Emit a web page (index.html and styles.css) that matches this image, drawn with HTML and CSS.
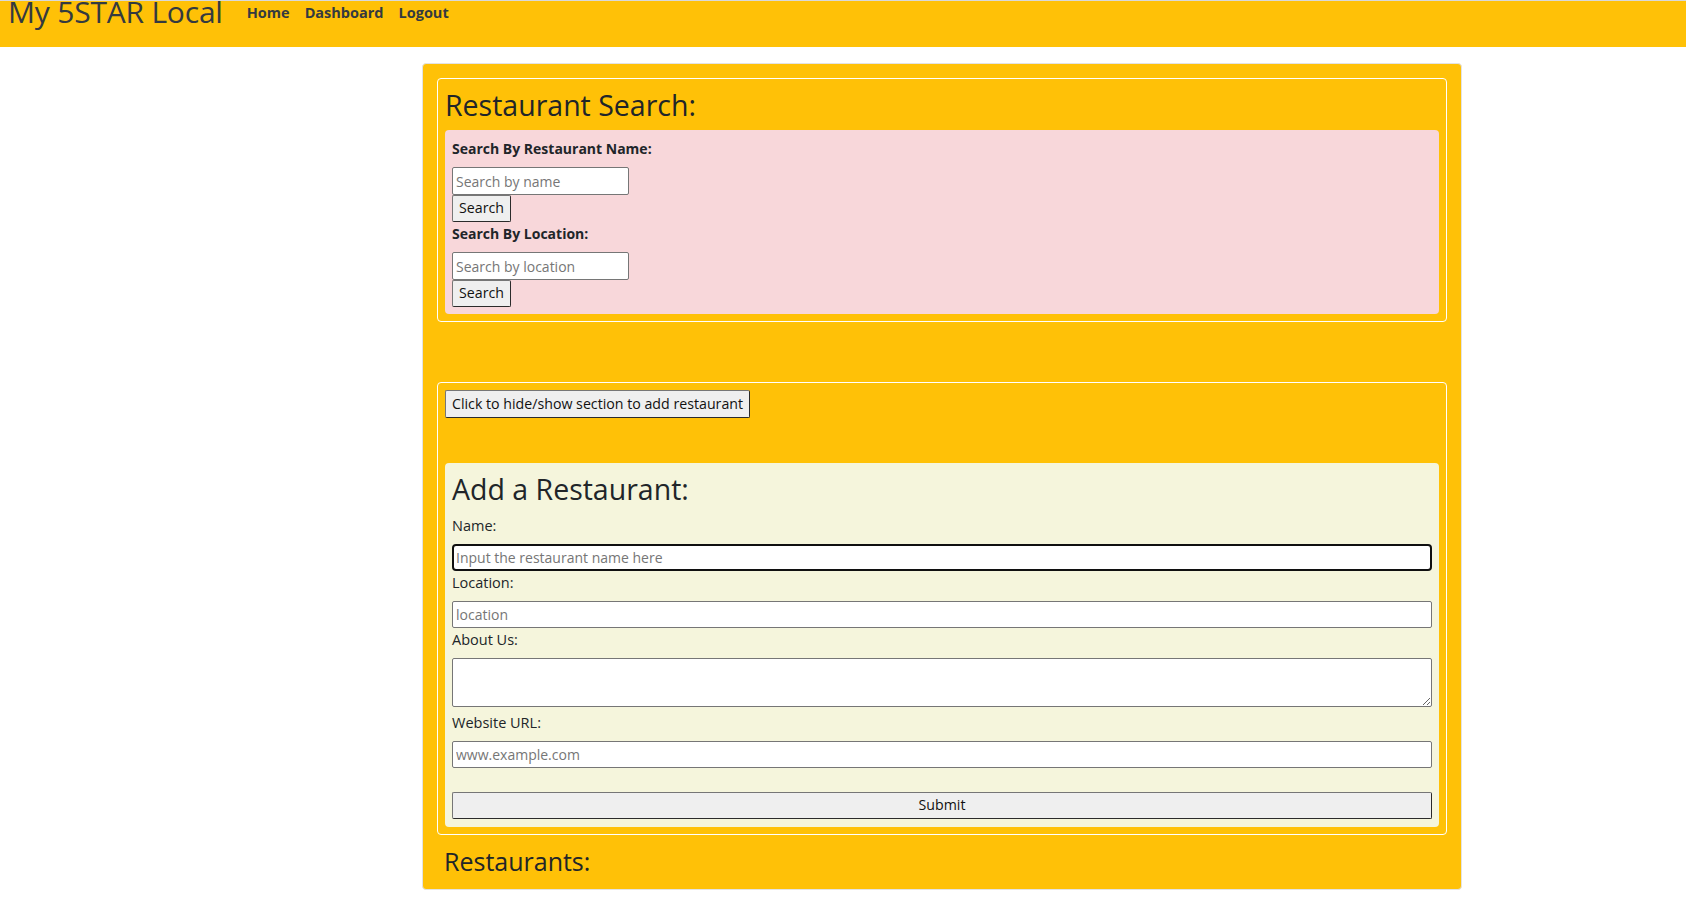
FILE: index.html
```html
<!DOCTYPE html>
<html lang="en">
<head>
<meta charset="utf-8">
<title>My 5STAR Local</title>
<link rel="stylesheet" href="styles.css">
</head>
<body>
<header class="navbar">
  <a class="brand" href="#">My 5STAR Local</a>
  <nav class="nav">
    <a href="#">Home</a>
    <a href="#">Dashboard</a>
    <a href="#">Logout</a>
  </nav>
</header>

<main class="panel">
  <section class="card">
    <h2 class="title">Restaurant Search:</h2>
    <div class="search-box">
      <label class="blabel">Search By Restaurant Name:</label>
      <input class="small-input" type="text" placeholder="Search by name">
      <button class="btn">Search</button>
      <label class="blabel">Search By Location:</label>
      <input class="small-input" type="text" placeholder="Search by location">
      <button class="btn">Search</button>
    </div>
  </section>

  <section class="card card-add">
    <button class="btn toggle">Click to hide/show section to add restaurant</button>
    <form class="add-box">
      <h2 class="title">Add a Restaurant:</h2>
      <label class="flabel">Name:</label>
      <input class="wide-input focused" type="text" placeholder="Input the restaurant name here">
      <label class="flabel">Location:</label>
      <input class="wide-input" type="text" placeholder="location">
      <label class="flabel">About Us:</label>
      <textarea class="wide-area"></textarea>
      <label class="flabel">Website URL:</label>
      <input class="wide-input" type="text" placeholder="www.example.com">
      <button class="btn submit" type="button">Submit</button>
    </form>
  </section>

  <h3 class="list-title">Restaurants:</h3>
</main>
</body>
</html>
```

FILE: styles.css
```css
* { box-sizing: border-box; }

body {
  margin: 0;
  font-family: "Open Sans", "Noto Sans", sans-serif;
  font-size: 16px;
  line-height: 1.5;
  color: #212529;
  background: #fff;
}

.navbar {
  display: flex;
  align-items: flex-start;
  height: 47px;
  background: #ffc107;
  border-top: 1px solid #d9d9d9;
  padding-left: 8px;
}

.brand {
  font-size: 30px;
  line-height: 22px;
  color: #343a40;
  text-decoration: none;
  letter-spacing: -0.2px;
}

.nav {
  display: flex;
  gap: 15px;
  margin-left: 24px;
  margin-top: 1px;
}

.nav a {
  font-size: 14.5px;
  font-weight: 700;
  color: #343a40;
  text-decoration: none;
  line-height: 22px;
}

.panel {
  width: 1040px;
  margin: 16px 0 0 422px;
  background: #ffc107;
  border: 1px solid #e3e3e3;
  border-radius: 4px;
  padding: 14px 14px 13px 14px;
}

.card {
  border: 1px solid #fff;
  border-radius: 4px;
  padding: 7px;
}

.card-add {
  margin-top: 60px;
}

.title {
  margin: 0 0 6px 0;
  font-size: 28.5px;
  font-weight: 400;
  line-height: 38px;
  color: #212529;
}

.search-box {
  background: #f8d7da;
  border-radius: 4px;
  padding: 7px;
  display: flex;
  flex-direction: column;
  align-items: flex-start;
}

.blabel {
  font-weight: 700;
  font-size: 14px;
  line-height: 24px;
  margin-bottom: 6px;
}

.small-input {
  width: 177px;
  height: 28px;
}

input, textarea {
  font-family: inherit;
  font-size: 14px;
  border: 1px solid #767676;
  border-radius: 2px;
  padding: 1px 3px;
  background: #fff;
  color: #212529;
}

input::placeholder { color: #767676; }

.btn {
  font-family: inherit;
  font-size: 14.2px;
  color: #111;
  background: #efefef;
  border: 1px solid #767676;
  border-right-color: #2b2b2b;
  border-bottom-color: #2b2b2b;
  border-radius: 2px;
  padding: 0 6px;
  height: 27px;
  line-height: 1;
}

.toggle {
  height: 28px;
  padding: 0 6px;
}

.add-box {
  margin-top: 45px;
  background: #f5f5dc;
  border-radius: 4px;
  padding: 7px 7px 8px 7px;
  display: flex;
  flex-direction: column;
}

.flabel {
  font-size: 14.5px;
  line-height: 24px;
  margin-bottom: 6px;
}

.wide-input {
  width: 100%;
  height: 27px;
}

.focused {
  border: 2px solid #101010;
  border-radius: 4px;
  padding-left: 2px;
}

.wide-area {
  width: 100%;
  height: 49px;
  margin-bottom: 4px;
  resize: vertical;
}

.submit {
  width: 100%;
  margin-top: 24px;
}

.list-title {
  margin: 11px 0 0 7px;
  font-size: 25px;
  font-weight: 400;
  line-height: 30px;
}
```
